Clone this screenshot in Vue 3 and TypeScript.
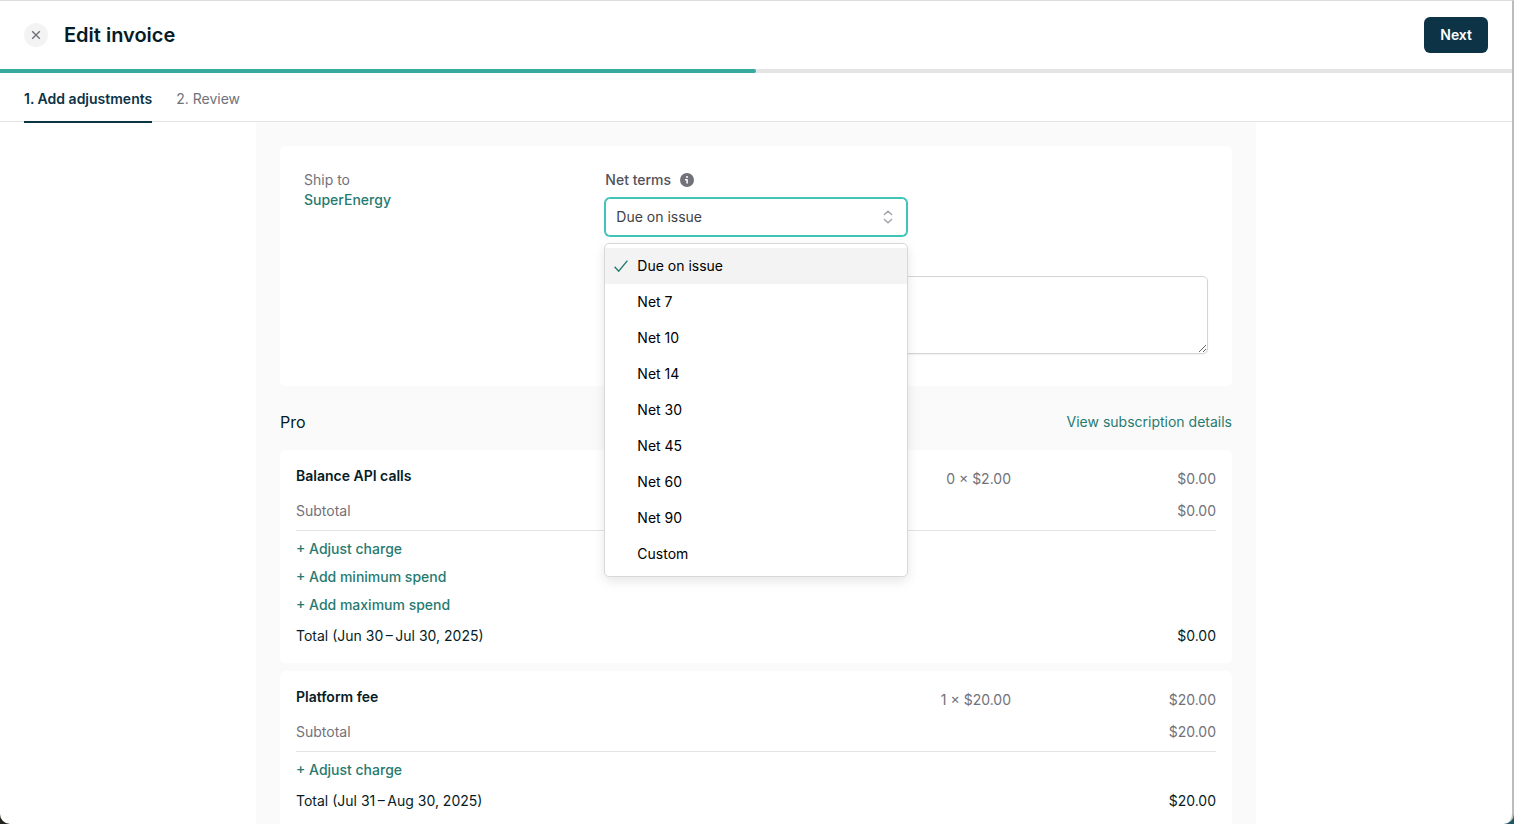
<script setup lang="ts">
import { ref } from 'vue'

interface LineItem {
  name: string
  quantity: string
  amount: string
  actions: string[]
  period: string
}

const steps = ['1. Add adjustments', '2. Review']
const activeStep = ref(0)

const terms = ['Due on issue', 'Net 7', 'Net 10', 'Net 14', 'Net 30', 'Net 45', 'Net 60', 'Net 90', 'Custom']
const selected = ref('Due on issue')
const open = ref(true)
const memo = ref('')

const items: LineItem[] = [
  {
    name: 'Balance API calls',
    quantity: '0 × $2.00',
    amount: '$0.00',
    actions: ['Adjust charge', 'Add minimum spend', 'Add maximum spend'],
    period: 'Jun 30\u2009–\u2009Jul 30, 2025',
  },
  {
    name: 'Platform fee',
    quantity: '1 × $20.00',
    amount: '$20.00',
    actions: ['Adjust charge'],
    period: 'Jul 31\u2009–\u2009Aug 30, 2025',
  },
]

function choose(term: string) {
  selected.value = term
  open.value = false
}
</script>

<template>
  <div class="desktop">
    <div class="window">
      <header class="header">
        <button class="close" type="button" aria-label="Close">
          <svg width="10" height="10" viewBox="0 0 10 10" aria-hidden="true">
            <path d="M1.2 1.2 8.8 8.8M8.8 1.2 1.2 8.8" />
          </svg>
        </button>
        <h1>Edit invoice</h1>
        <button class="next" type="button">Next</button>
      </header>
      <div class="progress"><div class="progress-bar"></div></div>
      <nav class="tabs">
        <button
          v-for="(step, i) in steps"
          :key="step"
          type="button"
          class="tab"
          :class="{ active: i === activeStep }"
          @click="activeStep = i"
        >{{ step }}</button>
      </nav>

      <main class="content">
        <section class="card details">
          <div class="ship">
            <div class="muted">Ship to</div>
            <a href="#customer" class="customer">SuperEnergy</a>
          </div>
          <div class="terms">
            <div class="label-row">
              <label for="net-terms">Net terms</label>
              <svg class="info" width="14" height="14" viewBox="0 0 14 14" aria-hidden="true">
                <circle cx="7" cy="7" r="7" fill="#71717a" />
                <circle cx="7" cy="4" r="1" fill="#fff" />
                <path d="M5.6 6.7H7.1V10" fill="none" stroke="#fff" stroke-width="1.5" stroke-linecap="round" stroke-linejoin="round" />
              </svg>
            </div>
            <div class="select-wrap">
              <select id="net-terms" v-model="selected" @mousedown.prevent="open = !open">
                <option v-for="term in terms" :key="term">{{ term }}</option>
              </select>
              <svg class="chevrons" width="10" height="14" viewBox="0 0 10 14" aria-hidden="true">
                <path d="M1.4 4.6 5 1.2 8.6 4.6M1.4 9.4 5 12.8 8.6 9.4" />
              </svg>
              <ul v-if="open" class="menu">
                <li v-for="term in terms" :key="term">
                  <button type="button" class="option" :class="{ chosen: term === selected }" @click="choose(term)">
                    <svg v-if="term === selected" class="check" width="14" height="12" viewBox="0 0 14 12" aria-hidden="true">
                      <path d="M.6 6.8 4.7 11.2 13.4 .6" />
                    </svg>
                    {{ term }}
                  </button>
                </li>
              </ul>
            </div>
          </div>
          <textarea v-model="memo" class="memo" aria-label="Memo"></textarea>
        </section>

        <div class="plan">
          <h2>Pro</h2>
          <a href="#subscription">View subscription details</a>
        </div>

        <section v-for="item in items" :key="item.name" class="card item">
          <table>
            <tbody>
              <tr class="main-row">
                <th scope="row">{{ item.name }}</th>
                <td class="quantity">{{ item.quantity }}</td>
                <td class="amount">{{ item.amount }}</td>
              </tr>
              <tr class="sub-row">
                <td colspan="2">Subtotal</td>
                <td class="amount">{{ item.amount }}</td>
              </tr>
            </tbody>
          </table>
          <div class="actions">
            <button v-for="action in item.actions" :key="action" type="button">+ {{ action }}</button>
          </div>
          <div class="total">
            <span>Total ({{ item.period }})</span>
            <span>{{ item.amount }}</span>
          </div>
        </section>
      </main>
    </div>
  </div>
</template>

<style>
body {
  margin: 0;
}
</style>

<style scoped>
* {
  box-sizing: border-box;
}
.desktop {
  height: 100vh;
  background: linear-gradient(to right, #24241f 50%, #1d5565 50%);
  font-family: Inter, "Liberation Sans", sans-serif;
  font-size: 14px;
  line-height: 20px;
  color: #051c26;
}
.window {
  height: 100%;
  overflow: hidden;
  display: flex;
  flex-direction: column;
  background: #fff;
  border-top: 1px solid #dcdcdc;
  border-right: 2px solid #bcbcbc;
  border-radius: 0 0 10px 10px;
}
button {
  font: inherit;
  border: 0;
  background: none;
  padding: 0;
  cursor: pointer;
}
a {
  color: #277a70;
  text-decoration: none;
}
.header {
  flex: none;
  display: flex;
  align-items: center;
  height: 68px;
  padding: 0 24px;
}
.close {
  display: flex;
  align-items: center;
  justify-content: center;
  width: 24px;
  height: 24px;
  border-radius: 50%;
  background: #f3f3f3;
}
.close path {
  fill: none;
  stroke: #71717a;
  stroke-width: 1.4;
}
h1 {
  margin: 0 auto 0 16px;
  font-size: 20px;
  line-height: 28px;
  font-weight: 600;
}
.next {
  height: 36px;
  padding: 0 16px;
  border-radius: 6px;
  background: #0d3347;
  color: #fff;
  font-weight: 600;
}
.progress {
  flex: none;
  height: 4px;
  background: #e4e4e5;
}
.progress-bar {
  width: 50%;
  height: 100%;
  background: #36aa9d;
  border-radius: 0 2px 2px 0;
}
.tabs {
  flex: none;
  position: relative;
  display: flex;
  gap: 24px;
  height: 49px;
  padding: 0 24px;
  border-bottom: 1px solid #e4e4e7;
}
.tab {
  height: 50px;
  padding-top: 4px;
  border-bottom: 2px solid transparent;
  color: #71717a;
}
.tab.active {
  color: #0d3347;
  font-weight: 600;
  border-color: #0d3347;
}
.content {
  flex: 1;
  min-height: 0;
  overflow: hidden;
  width: 100%;
  max-width: 1000px;
  margin: 0 auto;
  padding: 24px;
  background: #fafafa;
}
.card {
  background: #fff;
  border-radius: 6px;
}
.details {
  display: grid;
  grid-template-columns: repeat(3, 1fr);
  row-gap: 40px;
  padding: 24px 24px 32px;
}
.muted {
  color: #71717a;
}
.customer {
  font-weight: 500;
}
.label-row {
  display: flex;
  align-items: center;
  gap: 9px;
  margin-bottom: 8px;
  color: #52525b;
  font-weight: 500;
}
.select-wrap {
  position: relative;
}
select {
  display: block;
  appearance: none;
  width: 100%;
  height: 38px;
  padding: 0 32px 0 10px;
  border: 1px solid #40c4b8;
  border-radius: 5px;
  outline: none;
  box-shadow: 0 0 0 1px #40c4b8;
  background: #fff;
  color: #3f3f46;
  font: inherit;
}
.chevrons {
  position: absolute;
  top: 12px;
  right: 14px;
  pointer-events: none;
}
.chevrons path {
  fill: none;
  stroke: #a1a1aa;
  stroke-width: 1.4;
  stroke-linecap: round;
  stroke-linejoin: round;
}
.menu {
  position: absolute;
  z-index: 2;
  top: 45px;
  left: -1px;
  right: -1px;
  margin: 0;
  padding: 4px 0;
  list-style: none;
  background: #fff;
  border: 1px solid #d8d8da;
  border-radius: 5px;
  box-shadow: 0 4px 12px rgba(0, 0, 0, 0.1);
}
.option {
  position: relative;
  display: block;
  width: 100%;
  height: 36px;
  padding: 0 32px;
  text-align: left;
  color: #000;
}
.option.chosen {
  background: #f3f3f3;
}
.check {
  position: absolute;
  left: 9px;
  top: 12px;
}
.check path {
  fill: none;
  stroke: #277a70;
  stroke-width: 1.4;
}
.memo {
  display: block;
  grid-column: 2 / 4;
  width: 100%;
  height: 78px;
  border: 1px solid #d4d4d8;
  border-radius: 5px;
  background: #fff;
  box-shadow: 0 1px 2px rgba(0, 0, 0, 0.06);
  font: inherit;
  resize: vertical;
}
.plan {
  display: flex;
  align-items: center;
  justify-content: space-between;
  padding: 24px 0 16px;
}
h2 {
  margin: 0;
  font-size: 16px;
  line-height: 24px;
  font-weight: 400;
}
.item {
  padding: 16px 16px 17px;
  margin-bottom: 8px;
}
table {
  width: 100%;
  border-collapse: collapse;
}
th,
td {
  padding: 0;
  text-align: left;
  vertical-align: top;
  color: #71717a;
}
th {
  color: #051c26;
  font-weight: 600;
}
.main-row {
  height: 29px;
}
.main-row td {
  padding-top: 3px;
}
.sub-row td {
  padding: 6px 0 9px;
  border-bottom: 1px solid #e4e4e7;
}
.quantity,
.amount {
  text-align: right;
}
.amount {
  width: 205px;
}
.actions {
  display: flex;
  flex-direction: column;
  align-items: flex-start;
  padding-top: 4px;
}
.actions button {
  height: 28px;
  color: #277a70;
  font-weight: 500;
}
.total {
  display: flex;
  justify-content: space-between;
  padding-top: 7px;
}
</style>
